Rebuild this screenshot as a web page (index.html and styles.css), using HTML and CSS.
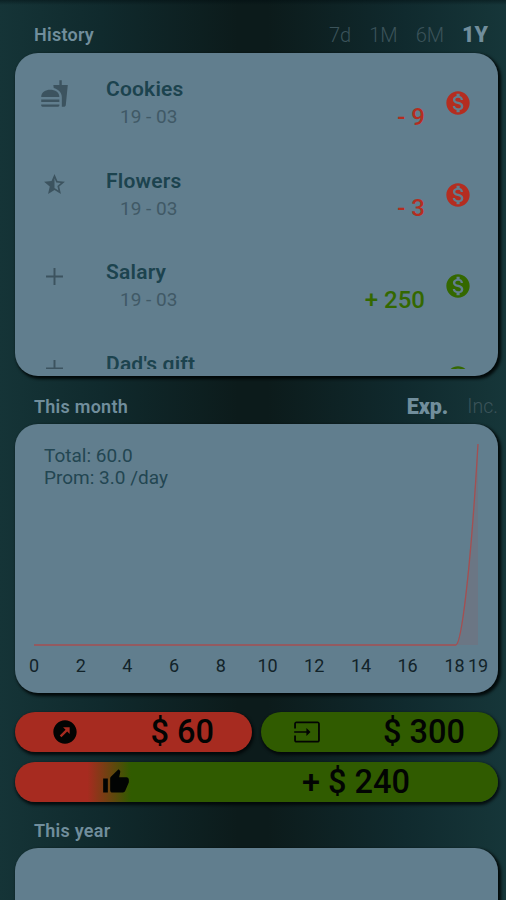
FILE: index.html
```html
<!DOCTYPE html>
<html lang="en">
<head>
<meta charset="utf-8">
<title>Expenses</title>
<link rel="stylesheet" href="styles.css">
</head>
<body>
<svg class="defs" width="0" height="0">
  <symbol id="food" viewBox="0 0 24 24"><path d="M18.06 22.99h1.66c.84 0 1.53-.64 1.63-1.46L23 5.05h-5V1h-1.97v4.05h-4.97l.3 2.34c1.71.47 3.31 1.32 4.27 2.26 1.44 1.42 2.43 2.89 2.43 5.29v8.05zM1 21.99V21h15.03v.99c0 .55-.45 1-1.01 1H2.01c-.56 0-1.01-.45-1.01-1zm15.03-7c0-8-15.03-8-15.03 0h15.03zM1.02 17h15v2h-15z"/></symbol>
  <symbol id="star" viewBox="0 0 24 24"><path d="M22 9.24l-7.19-.62L12 2 9.19 8.63 2 9.24l5.46 4.73L5.82 21 12 17.27 18.18 21l-1.63-7.03L22 9.24zM12 15.4V6.1l1.71 4.04 4.38.38-3.32 2.88 1 4.28L12 15.4z"/></symbol>
  <symbol id="plus" viewBox="0 0 24 24"><path d="M19 12.800h-6.200v6.200h-1.600v-6.200H5v-1.600h6.200V5h1.600v6.200H19z"/></symbol>
  <symbol id="coin" viewBox="0 0 24 24"><path d="M12 2C6.48 2 2 6.48 2 12s4.48 10 10 10 10-4.48 10-10S17.52 2 12 2zm1.41 16.09V20h-2.67v-1.93c-1.71-.36-3.16-1.46-3.27-3.4h1.96c.1 1.05.82 1.87 2.65 1.87 1.96 0 2.4-.98 2.4-1.59 0-.83-.44-1.61-2.67-2.14-2.48-.6-4.18-1.62-4.18-3.67 0-1.72 1.39-2.84 3.11-3.21V4h2.67v1.95c1.86.45 2.79 1.86 2.85 3.39H14.3c-.05-1.11-.64-1.87-2.22-1.87-1.5 0-2.4.68-2.4 1.64 0 .84.65 1.39 2.67 1.91s4.18 1.39 4.18 3.91c-.01 1.83-1.38 2.83-3.12 3.16z"/></symbol>
  <symbol id="out" viewBox="0 0 24 24"><path d="M12 2C6.48 2 2 6.48 2 12s4.48 10 10 10 10-4.48 10-10S17.52 2 12 2zm1.88 9.54L8.92 16.5l-1.41-1.41 4.96-4.96L10.34 8l5.65.01.01 5.65-2.12-2.12z"/></symbol>
  <symbol id="in" viewBox="0 0 24 24"><path d="M21 3.010H3c-1.100 0-2 .9-2 2V9h1.500V4.500h19v15H2.500V15H1v4.010c0 1.100.9 1.980 2 1.980h18c1.100 0 2-.88 2-1.980v-14c0-1.110-.9-2-2-2zM11.500 15.500l3.500-3.500-3.500-3.500v2.800H1v1.400h10.500z"/></symbol>
  <symbol id="thumb" viewBox="0 0 24 24"><path d="M1 21h4V9H1v12zm22-11c0-1.1-.9-2-2-2h-6.31l.95-4.57.03-.32c0-.41-.17-.79-.44-1.06L14.17 1 7.59 7.59C7.22 7.95 7 8.45 7 9v10c0 1.1.9 2 2 2h9c.83 0 1.54-.5 1.84-1.22l3.02-7.05c.09-.23.14-.47.14-.73v-2z"/></symbol>
</svg>
<main class="screen">
  <header class="head head-history">
    <h2>History</h2>
    <nav class="ranges"><span>7d</span><span>1M</span><span>6M</span><b>1Y</b></nav>
  </header>
  <section class="card history">
    <ul class="list">
      <li class="row expense">
        <svg class="kind large"><use href="#food"/></svg>
        <div class="what"><h3>Cookies</h3><p>19 - 03</p></div>
        <span class="amount">- 9</span>
        <svg class="coin"><use href="#coin"/></svg>
      </li>
      <li class="row expense">
        <svg class="kind"><use href="#star"/></svg>
        <div class="what"><h3>Flowers</h3><p>19 - 03</p></div>
        <span class="amount">- 3</span>
        <svg class="coin"><use href="#coin"/></svg>
      </li>
      <li class="row income">
        <svg class="kind add"><use href="#plus"/></svg>
        <div class="what"><h3>Salary</h3><p>19 - 03</p></div>
        <span class="amount">+ 250</span>
        <svg class="coin"><use href="#coin"/></svg>
      </li>
      <li class="row income">
        <svg class="kind add"><use href="#plus"/></svg>
        <div class="what"><h3>Dad's gift</h3></div>
        <span class="amount"></span>
        <svg class="coin"><use href="#coin"/></svg>
      </li>
    </ul>
  </section>

  <header class="head head-month">
    <h2>This month</h2>
    <nav class="types"><b>Exp.</b><span>Inc.</span></nav>
  </header>
  <section class="card month">
    <div class="stats"><p>Total: 60.0</p><p>Prom: 3.0 /day</p></div>
    <svg class="chart" viewBox="0 0 483 257" width="483" height="257">
      <path class="area" d="M441 221Q450 210 463 20V221Z"/>
      <path class="line" d="M19 221H441C446 219 455 157 463 20"/>
      <g class="axis">
        <text x="19" y="248">0</text><text x="65.700" y="248">2</text><text x="112.400" y="248">4</text><text x="159" y="248">6</text><text x="205.800" y="248">8</text><text x="252.500" y="248">10</text><text x="299.200" y="248">12</text><text x="346" y="248">14</text><text x="392.500" y="248">16</text><text x="439.500" y="248">18</text><text x="463" y="248">19</text>
      </g>
    </svg>
  </section>

  <section class="totals">
    <div class="pill spent"><svg><use href="#out"/></svg><span>$ 60</span></div>
    <div class="pill earned"><svg><use href="#in"/></svg><span>$ 300</span></div>
    <div class="pill balance"><svg><use href="#thumb"/></svg><span>+ $ 240</span></div>
  </section>

  <header class="head head-year"><h2>This year</h2></header>
  <section class="card year"></section>
</main>
</body>
</html>
```

FILE: styles.css
```css
* { box-sizing: border-box; margin: 0; padding: 0; }
body {
  font-family: Roboto, "Liberation Sans", sans-serif;
  overflow: hidden;
}
.defs { display: block; }
.screen {
  height: 900px;
  overflow: hidden;
  padding: 0 8px 0 15px;
  background:
    linear-gradient(rgba(0, 12, 15, .45), rgba(0, 12, 15, 0) 5px),
    linear-gradient(90deg, #153437 0, #102a2d 20%, #0c1b1b 47%, #0c1b1b 53%, #102a2e 80%, #163639 100%);
}
.head {
  display: flex;
  justify-content: space-between;
  align-items: center;
  padding-left: 19px;
  color: #718e9c;
}
.head h2 { font-size: 18px; font-weight: 600; line-height: 24px; letter-spacing: .25px; }
.head nav { display: flex; align-items: center; font-size: 20px; line-height: 24px; }
.head nav span { color: #3b535a; font-weight: 300; }
.head nav b { font-weight: 900; font-size: 21.5px; }
.head-history { height: 53px; padding-top: 16px; }
.head-month { height: 48px; padding-top: 13px; }
.head-year { height: 46px; padding-top: 12px; }
.ranges { gap: 18px; padding-right: 10px; }
.types { gap: 19px; }
.types span { font-size: 19.5px; }
.card {
  background: #617e8e;
  border-radius: 23px;
  box-shadow: 2px 2px 3px 1px rgba(0, 5, 6, .9);
}
.history { height: 323px; padding-bottom: 7px; }
.list { list-style: none; height: 316px; overflow: hidden; }
.row {
  height: 91.5px;
  display: grid;
  grid-template-columns: 79px 150px 1fr 66px;
  align-items: start;
}
.kind { width: 25px; height: 25px; fill: #3c535f; justify-self: center; margin-top: 27.5px; }
.kind.large { width: 29px; height: 29px; margin-top: 26px; }
.kind.add { width: 29px; height: 29px; margin-top: 26px; }
.what { padding: 24px 0 0 12px; }
.what h3 { font-size: 21px; font-weight: 600; line-height: 25px; letter-spacing: .2px; color: #1c434e; white-space: nowrap; }
.what p { font-size: 19px; line-height: 24px; padding: 3px 0 0 14px; color: #405966; font-weight: 400; }
.amount { text-align: right; font-size: 24px; line-height: 28px; font-weight: 500; padding: 49.5px 0 0; margin-right: 7px; }
.coin { width: 28px; height: 28px; margin: 36px 0 0 12px; }
.expense { color: #b42d20; fill: #b42d20; }
.income { color: #346800; fill: #346800; }
.month { height: 269px; display: grid; }
.stats, .chart { grid-area: 1 / 1; }
.stats { padding: 21px 29px; font-size: 19px; line-height: 22px; color: #234652; }
.chart { display: block; }
.line { fill: none; stroke: #a44f51; stroke-width: 1.3; }
.area { fill: #a44f51; fill-opacity: .16; }
.axis { font-size: 18px; text-anchor: middle; fill: #122329; }
.totals { display: grid; grid-template-columns: 237px 237px; gap: 10px 9px; padding-top: 19px; }
.pill {
  height: 40px;
  border-radius: 20px;
  display: flex;
  align-items: center;
  font-size: 32.5px;
  font-weight: 500;
  line-height: 40px;
  color: #020403;
  box-shadow: 1px 2px 3px 1px rgba(0, 5, 6, .8);
}
.pill svg { width: 28px; height: 28px; fill: #020403; flex: none; }
.spent { background: #a72b20; padding: 0 38px 0 36px; justify-content: space-between; }
.earned { background: #305b00; padding: 0 33px 0 32px; justify-content: space-between; }
.balance {
  grid-column: 1 / -1;
  padding: 0 88px 0 87px;
  justify-content: space-between;
  background: linear-gradient(90deg, #a72b20 15%, #305b00 24%);
}
.year { height: 80px; }
```
